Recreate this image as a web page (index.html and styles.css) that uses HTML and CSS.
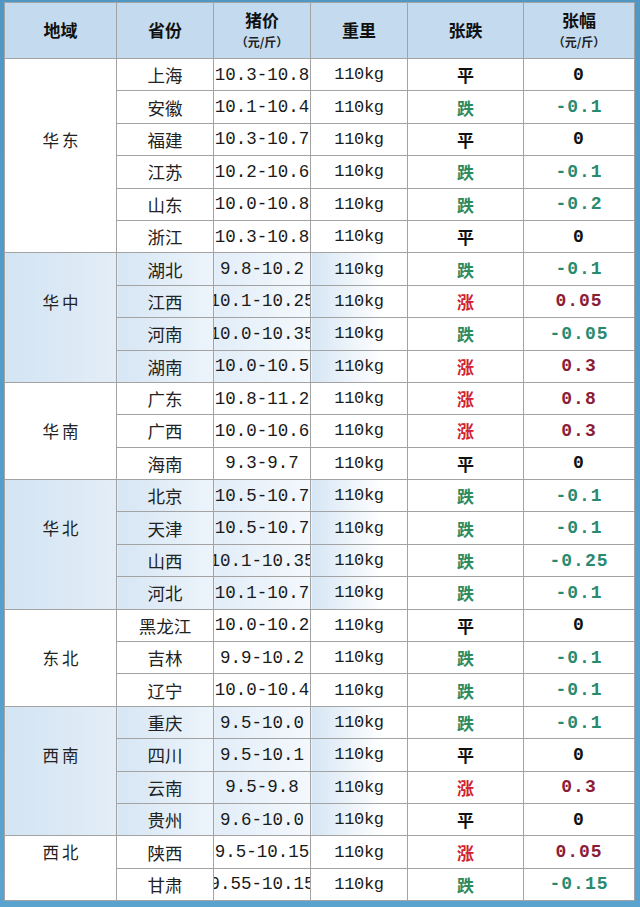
FILE: index.html
```html
<!DOCTYPE html>
<html lang="zh">
<head>
<meta charset="utf-8">
<link rel="stylesheet" href="styles.css">
</head>
<body>
<div class="frame">
<table class="grid">
<colgroup>
<col class="c1"><col class="c2"><col class="c3"><col class="c4"><col class="c5"><col class="c6">
</colgroup>
<thead>
<tr class="head">
<th>地域</th><th>省份</th><th><div class="h2">猪价</div><div class="unit">（元/斤）</div></th><th>重里</th><th>张跌</th><th><div class="h2">张幅</div><div class="unit">（元/斤）</div></th>
</tr>
</thead>
<tbody>
<tr class="w"><td rowspan="6" class="reg up">华东</td><td class="pv">上海</td><td class="pr"><div class="fit">10.3-10.8</div></td><td class="kg">110kg</td><td class="tr flat">平</td><td class="ch zero">0</td></tr>
<tr class="w"><td class="pv">安徽</td><td class="pr"><div class="fit">10.1-10.4</div></td><td class="kg">110kg</td><td class="tr down">跌</td><td class="ch neg">-0.1</td></tr>
<tr class="w"><td class="pv">福建</td><td class="pr"><div class="fit">10.3-10.7</div></td><td class="kg">110kg</td><td class="tr flat">平</td><td class="ch zero">0</td></tr>
<tr class="w"><td class="pv">江苏</td><td class="pr"><div class="fit">10.2-10.6</div></td><td class="kg">110kg</td><td class="tr down">跌</td><td class="ch neg">-0.1</td></tr>
<tr class="w"><td class="pv">山东</td><td class="pr"><div class="fit">10.0-10.8</div></td><td class="kg">110kg</td><td class="tr down">跌</td><td class="ch neg">-0.2</td></tr>
<tr class="w"><td class="pv">浙江</td><td class="pr"><div class="fit">10.3-10.8</div></td><td class="kg">110kg</td><td class="tr flat">平</td><td class="ch zero">0</td></tr>

<tr class="b"><td rowspan="4" class="reg up">华中</td><td class="pv">湖北</td><td class="pr"><div class="fit">9.8-10.2</div></td><td class="kg">110kg</td><td class="tr down">跌</td><td class="ch neg">-0.1</td></tr>
<tr class="b"><td class="pv">江西</td><td class="pr"><div class="fit">10.1-10.25</div></td><td class="kg">110kg</td><td class="tr up2">涨</td><td class="ch pos">0.05</td></tr>
<tr class="b"><td class="pv">河南</td><td class="pr"><div class="fit">10.0-10.35</div></td><td class="kg">110kg</td><td class="tr down">跌</td><td class="ch neg">-0.05</td></tr>
<tr class="b"><td class="pv">湖南</td><td class="pr"><div class="fit">10.0-10.5</div></td><td class="kg">110kg</td><td class="tr up2">涨</td><td class="ch pos">0.3</td></tr>

<tr class="w"><td rowspan="3" class="reg">华南</td><td class="pv">广东</td><td class="pr"><div class="fit">10.8-11.2</div></td><td class="kg">110kg</td><td class="tr up2">涨</td><td class="ch pos">0.8</td></tr>
<tr class="w"><td class="pv">广西</td><td class="pr"><div class="fit">10.0-10.6</div></td><td class="kg">110kg</td><td class="tr up2">涨</td><td class="ch pos">0.3</td></tr>
<tr class="w"><td class="pv">海南</td><td class="pr"><div class="fit">9.3-9.7</div></td><td class="kg">110kg</td><td class="tr flat">平</td><td class="ch zero">0</td></tr>

<tr class="b"><td rowspan="4" class="reg up">华北</td><td class="pv">北京</td><td class="pr"><div class="fit">10.5-10.7</div></td><td class="kg">110kg</td><td class="tr down">跌</td><td class="ch neg">-0.1</td></tr>
<tr class="b"><td class="pv">天津</td><td class="pr"><div class="fit">10.5-10.7</div></td><td class="kg">110kg</td><td class="tr down">跌</td><td class="ch neg">-0.1</td></tr>
<tr class="b"><td class="pv">山西</td><td class="pr"><div class="fit">10.1-10.35</div></td><td class="kg">110kg</td><td class="tr down">跌</td><td class="ch neg">-0.25</td></tr>
<tr class="b"><td class="pv">河北</td><td class="pr"><div class="fit">10.1-10.7</div></td><td class="kg">110kg</td><td class="tr down">跌</td><td class="ch neg">-0.1</td></tr>

<tr class="w"><td rowspan="3" class="reg">东北</td><td class="pv">黑龙江</td><td class="pr"><div class="fit">10.0-10.2</div></td><td class="kg">110kg</td><td class="tr flat">平</td><td class="ch zero">0</td></tr>
<tr class="w"><td class="pv">吉林</td><td class="pr"><div class="fit">9.9-10.2</div></td><td class="kg">110kg</td><td class="tr down">跌</td><td class="ch neg">-0.1</td></tr>
<tr class="w"><td class="pv">辽宁</td><td class="pr"><div class="fit">10.0-10.4</div></td><td class="kg">110kg</td><td class="tr down">跌</td><td class="ch neg">-0.1</td></tr>

<tr class="b"><td rowspan="4" class="reg up">西南</td><td class="pv">重庆</td><td class="pr"><div class="fit">9.5-10.0</div></td><td class="kg">110kg</td><td class="tr down">跌</td><td class="ch neg">-0.1</td></tr>
<tr class="b"><td class="pv">四川</td><td class="pr"><div class="fit">9.5-10.1</div></td><td class="kg">110kg</td><td class="tr flat">平</td><td class="ch zero">0</td></tr>
<tr class="b"><td class="pv">云南</td><td class="pr"><div class="fit">9.5-9.8</div></td><td class="kg">110kg</td><td class="tr up2">涨</td><td class="ch pos">0.3</td></tr>
<tr class="b"><td class="pv">贵州</td><td class="pr"><div class="fit">9.6-10.0</div></td><td class="kg">110kg</td><td class="tr flat">平</td><td class="ch zero">0</td></tr>

<tr class="w"><td rowspan="2" class="reg up">西北</td><td class="pv">陕西</td><td class="pr"><div class="fit">9.5-10.15</div></td><td class="kg">110kg</td><td class="tr up2">涨</td><td class="ch pos">0.05</td></tr>
<tr class="w"><td class="pv">甘肃</td><td class="pr"><div class="fit">9.55-10.15</div></td><td class="kg">110kg</td><td class="tr down">跌</td><td class="ch neg">-0.15</td></tr>
</tbody>
</table>
</div>
</body>
</html>
```

FILE: styles.css
```css
html, body {
  margin: 0;
  padding: 0;
  background: #ffffff;
}

.frame {
  width: 640px;
  height: 907px;
  box-sizing: border-box;
  padding: 2px 6px 0 4px;
  background: linear-gradient(#4f98c6, #5aa3cf);
}

.grid {
  width: 630px;
  border-collapse: collapse;
  table-layout: fixed;
  background: #ffffff;
  font-family: "Noto Sans CJK SC", "Noto Sans", sans-serif;
  color: #1a1a1a;
}

.c1 { width: 112px; }
.c2 { width: 97px; }
.c3 { width: 97px; }
.c4 { width: 97px; }
.c5 { width: 116px; }
.c6 { width: 111px; }

.grid th,
.grid td {
  border: 1px solid #a3a3a3;
  padding: 0;
  text-align: center;
  vertical-align: middle;
}

.head th {
  height: 55px;
  background: #c4dbef;
  font-weight: 700;
  font-size: 17px;
  line-height: 1.2;
  color: #111;
}

.h2 {
  font-size: 17px;
  margin-top: -2px;
}

.unit {
  font-size: 12px;
  font-weight: 700;
  margin-top: 5px;
  color: #222;
}

.grid tbody td {
  height: 31.4px;
}

.b td {
  background: linear-gradient(90deg, #d6e6f4, #edf4fb);
}

.b td.tr,
.b td.ch {
  background: #ffffff;
}

.b td.kg {
  background: linear-gradient(90deg, #d6e6f4, #ffffff 75%);
}

.b td.pr {
  background: linear-gradient(90deg, #e2edf8, #f3f8fc);
}

.b td.reg {
  background: linear-gradient(90deg, #d3e4f3, #e3edf7);
}

.reg {
  font-size: 16.5px;
  letter-spacing: 3px;
  text-indent: 3px;
  color: #222;
}

.reg.up {
  padding-bottom: 32px;
}

.pv {
  font-size: 17.5px;
  color: #222;
}

.fit {
  display: flex;
  justify-content: center;
  overflow: hidden;
  white-space: nowrap;
  font-family: "Liberation Mono", "DejaVu Sans Mono", monospace;
  font-size: 17.5px;
  color: #1a1a1a;
}

.kg {
  font-family: "Liberation Mono", "DejaVu Sans Mono", monospace;
  font-size: 17px;
  color: #1a1a1a;
  letter-spacing: -0.3px;
}

.tr {
  font-size: 17px;
  font-weight: 700;
}

.flat { color: #111111; }
.down { color: #2e8b5c; }
.up2 { color: #d2222c; }

.ch {
  font-family: "Liberation Mono", "DejaVu Sans Mono", monospace;
  font-weight: 700;
  font-size: 18px;
  letter-spacing: 1px;
}

.zero { color: #111111; }
.neg { color: #2a8a70; }
.pos { color: #8c1d36; }
```
